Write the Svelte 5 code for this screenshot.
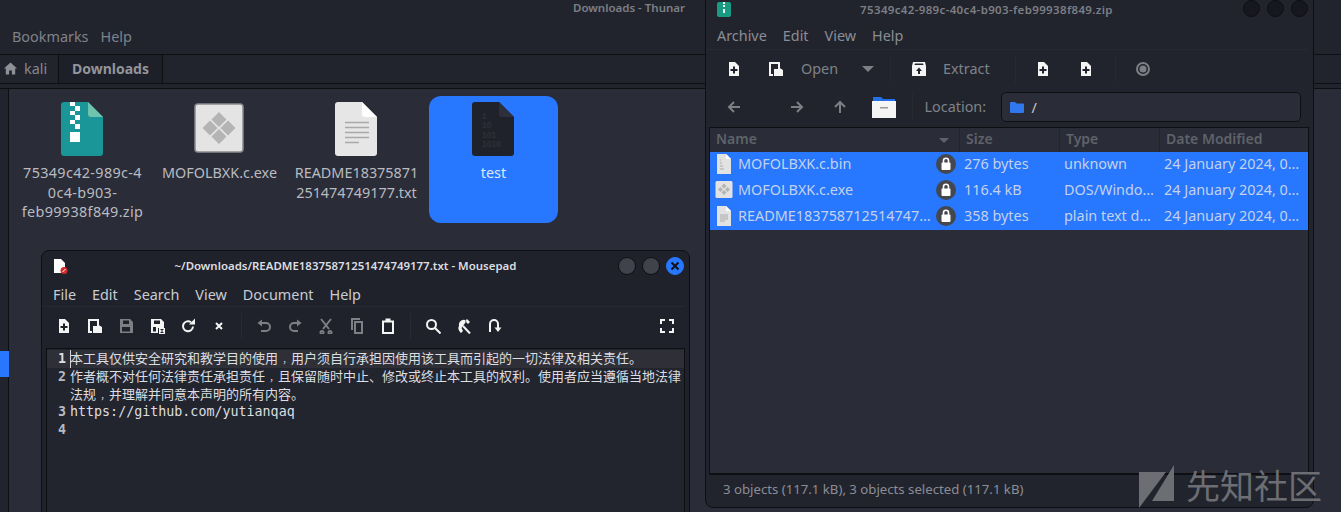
<script>
  const W = '#f4f4f4', D = '#20222b', G = '#7d7f85';
  const icons = {
    add: [['M3 1h6l4 4v10H3z', W], ['M7 5.500h2v2.500h2.500v2H9v2.500H7V10H4.500V8H7z', D]],
    open: [['M1 1h11v6h-2V3H3v10h2v2H1z', W], ['M6 8h4V6l5 3v6H6z', W]],
    save: [['M2 1h10l3 3v11H2zM5 2.500v3.500h6V2.500zM4 9v4.500h8V9z', G]],
    saveas: [['M2 1h10l3 3v6H9v5H2zM5 2.500v3.500h6V2.500zM4 9v4.500h3V9z', W], ['M10 10h6v6h-6zM11.500 11v1h1v2h-1v1h3v-1h-1v-2h1v-1z', W]],
    reload: [['M13 8.500a5 5 0 1 1-2-4.300', 'none', W], ['M9 6.500h6v-6z', W]],
    close: [['M5 5l6 6M11 5l-6 6', 'none', W]],
    undo: [['M4 5h6a3.500 3.500 0 0 1 0 8H5', 'none', G], ['M6 1.500v7L1.500 5z', G]],
    redo: [['M12 5H7a3.500 3.500 0 0 0 0 8h4', 'none', G], ['M10 1.500v7L14.500 5z', G]],
    cut: [['M3 1l8 10M13 1l-8 10', 'none', G], ['M4 13a1.500 1.500 0 1 0 .01 0M12 13a1.500 1.500 0 1 0 .01 0', 'none', G]],
    copy: [['M2 0h9v2H4v10H2z', G], ['M5 3h9v13H5zM7 5v9h5V5z', G]],
    paste: [['M2 2.500h3.500V.500h5v2H14V16H2zM4 4.500V14h8V4.500z', W]],
    search: [['M6.500 6.500m-4.500 0a4.500 4.500 0 1 0 9 0a4.500 4.500 0 1 0-9 0M10 10l5.500 5.500', 'none', W]],
    replace: [['M7 8l7 7.500', 'none', W], ['M3 8a5 5 0 0 1 6-6l1.500 1L7 8 5.500 10 7 13l-2 2C3 13 1.500 10.500 3 8zM11 1l3 3-2 2-3-3z', W]],
    jump: [['M3 14V6a4 4 0 0 1 8 0v4', 'none', W], ['M7.500 9.500h7L11 14z', W]],
    full: [['M2 6V2h4M10 2h4v4M14 10v4h-4M6 14H2v-4', 'none', W]],
    extract: [['M2 1h12l1 4v10H1V5zM4 2.500 3.500 4h9L12 2.500zM8 6.500 5 10h2v3h2v-3h2z', W]],
    back: [['M14 8H3M8 3 3 8l5 5', 'none', G]],
    forward: [['M2 8h11M8 3l5 5-5 5', 'none', G]],
    up: [['M8 14V3M3 8l5-5 5 5', 'none', G]],
    record: [['M8 8m-6 0a6 6 0 1 0 12 0a6 6 0 1 0-12 0', 'none', G], ['M8 8m-3.500 0a3.500 3.500 0 1 0 7 0a3.500 3.500 0 1 0-7 0', G]]
  };
  const padTools = [
    ['add'], ['open'], ['save'], ['saveas'], ['reload'], ['close'], 'sep',
    ['undo'], ['redo'], ['cut'], ['copy'], ['paste'], 'sep',
    ['search'], ['replace'], ['jump']
  ];
  const rows = [
    { name: 'MOFOLBXK.c.bin', size: '276 bytes', type: 'unknown', kind: 'bin' },
    { name: 'MOFOLBXK.c.exe', size: '116.4 kB', type: 'DOS/Windo…', kind: 'exe' },
    { name: 'README183758712514747…', size: '358 bytes', type: 'plain text d…', kind: 'txt' }
  ];
</script>

{#snippet ico(n)}
  <svg class="ico" viewBox="0 0 16 16" width="16" height="16">
    {#each icons[n] as p}
      <path d={p[0]} fill={p[1]} stroke={p[2] || 'none'} stroke-width="2" fill-rule="evenodd" />
    {/each}
  </svg>
{/snippet}

{#snippet lock()}
  <svg class="lock" viewBox="0 0 20 20" width="20" height="20">
    <circle cx="10" cy="10" r="10" fill="#45474f" />
    <rect x="5.500" y="8.500" width="9" height="7.500" rx="1" fill="#fff" />
    <path d="M7.500 9V6.800a2.500 2.500 0 0 1 5 0V9" fill="none" stroke="#fff" stroke-width="1.600" />
  </svg>
{/snippet}

<div class="thunar">
  <header class="th-head">
    <div class="th-title">Downloads - Thunar</div>
    <nav class="th-menu"><span>Bookmarks</span><span>Help</span></nav>
  </header>
  <div class="pathbar">
    <div class="crumb home">
      <svg viewBox="0 0 16 16" width="15" height="15"><path d="M8 1.500 1 8h2v6.500h3.500V10h3v4.500H13V8h2z" fill="#8f9197" /></svg>
      <span>kali</span>
    </div>
    <div class="crumb current">Downloads</div>
  </div>
  <div class="strip"></div>
  <div class="th-body">
    <aside class="sidebar"><div class="side-sel"></div></aside>
    <main class="grid">
      <div class="item">
        <svg viewBox="0 0 42 54" width="42" height="54">
          <path d="M3 0h24l15 15v36a3 3 0 0 1-3 3H3a3 3 0 0 1-3-3V3a3 3 0 0 1 3-3z" fill="#1a9598" />
          <path d="M27 0l15 15H30a3 3 0 0 1-3-3z" fill="#6fc4ae" />
          <path d="M9 0h5v4H9zM14 4h5v5h-5zM9 9h5v4H9zM14 13h5v5h-5zM9 18h5v4H9zM14 22h5v5h-5zM9 30h10v10H9z" fill="#fff" />
        </svg>
        <div class="lbl wide">75349c42-989c-4<br />0c4-b903-<br />feb99938f849.zip</div>
      </div>
      <div class="item">
        <svg viewBox="0 0 50 50" width="50" height="50" class="exe">
          <rect x="1" y="1" width="48" height="48" rx="3" fill="#e4e4e4" stroke="#8a8b8f" stroke-width="1.500" />
          <path d="M25 9l7.500 7.500L25 24l-7.500-7.500zM25 26l7.500 7.500L25 41l-7.500-7.500zM16 17.500 23.500 25 16 32.500 8.500 25zM34 17.500 41.500 25 34 32.500 26.500 25z" fill="#b4b4b4" />
        </svg>
        <div class="lbl">MOFOLBXK.c.exe</div>
      </div>
      <div class="item">
        <svg viewBox="0 0 42 54" width="42" height="54">
          <path d="M3 0h24l15 15v36a3 3 0 0 1-3 3H3a3 3 0 0 1-3-3V3a3 3 0 0 1 3-3z" fill="#e6e6e6" />
          <path d="M27 0l15 15H30a3 3 0 0 1-3-3z" fill="#fff" />
          <path d="M10 20.500h24M10 25.500h24M10 30.500h24M10 35.500h24M10 40.500h14" stroke="#a9a9a9" stroke-width="1.500" />
        </svg>
        <div class="lbl">README18375871<br />251474749177.txt</div>
      </div>
      <div class="item sel">
        <svg viewBox="0 0 42 54" width="42" height="54">
          <path d="M3 0h24l15 15v36a3 3 0 0 1-3 3H3a3 3 0 0 1-3-3V3a3 3 0 0 1 3-3z" fill="#20222b" />
          <path d="M27 0l15 15H30a3 3 0 0 1-3-3z" fill="#2d2f3b" />
          <text x="10" y="17" class="bits">1</text>
          <text x="10" y="26" class="bits">10</text>
          <text x="10" y="36" class="bits">101</text>
          <text x="10" y="45" class="bits">1010</text>
        </svg>
        <div class="lbl">test</div>
      </div>
    </main>
  </div>

  <section class="win pad">
    <div class="pad-title">
      <svg class="pad-ico" viewBox="0 0 14 15" width="14" height="15">
        <path d="M0 0h7l4 4v10H0z" fill="#fff" />
        <circle cx="10" cy="11.500" r="3.500" fill="#d22c2c" />
        <path d="M8.500 13l3-3" stroke="#fff" stroke-width="1" />
      </svg>
      <div class="pad-name">~/Downloads/README18375871251474749177.txt - Mousepad</div>
      <div class="btns">
        <span class="dot"></span><span class="dot"></span>
        <span class="dot x">
          <svg viewBox="0 0 10 10" width="10" height="10"><path d="M1.500 1.500l7 7M8.500 1.500l-7 7" stroke="#101218" stroke-width="2" /></svg>
        </span>
      </div>
    </div>
    <nav class="pad-menu">
      <span>File</span><span>Edit</span><span>Search</span><span>View</span><span>Document</span><span>Help</span>
    </nav>
    <div class="pad-tools">
      {#each padTools as t}
        {#if t === 'sep'}<i class="tsep"></i>{:else}<span class="tb">{@render ico(t[0])}</span>{/if}
      {/each}
      <span class="tb push">{@render ico('full')}</span>
    </div>
    <div class="editor">
      <div class="ln cur"><b>1</b><p><i class="caret"></i>本工具仅供安全研究和教学目的使用<span class="cm">，</span>用户须自行承担因使用该工具而引起的一切法律及相关责任。</p></div>
      <div class="ln"><b>2</b><p>作者概不对任何法律责任承担责任<span class="cm">，</span>且保留随时中止、修改或终止本工具的权利。使用者应当遵循当地法律<br />法规<span class="cm">，</span>并理解并同意本声明的所有内容。</p></div>
      <div class="ln"><b>3</b><p class="url">https://github.com/yutianqaq</p></div>
      <div class="ln"><b>4</b><p></p></div>
    </div>
  </section>

  <section class="win arch">
    <div class="ar-title">
      <svg class="ar-ico" viewBox="0 0 14 15" width="14" height="15">
        <rect width="14" height="15" rx="2" fill="#1a9a82" />
        <path d="M6 0h2v2H6zM6 3h2v2H6zM6 7h2v4H6z" fill="#e8f5f0" />
      </svg>
      <div class="ar-name">75349c42-989c-40c4-b903-feb99938f849.zip</div>
      <div class="btns dim"><span class="dot"></span><span class="dot"></span><span class="dot"></span></div>
    </div>
    <nav class="ar-menu"><span>Archive</span><span>Edit</span><span>View</span><span>Help</span></nav>
    <div class="ar-tools">
      <span class="tb t1">{@render ico('add')}</span>
      <span class="tb t2">{@render ico('open')}</span>
      <span class="tl t3">Open</span>
      <span class="caretdown t4"></span>
      <i class="tsep2 s1"></i>
      <span class="tb t5">{@render ico('extract')}</span>
      <span class="tl t6">Extract</span>
      <i class="tsep2 s2"></i>
      <span class="tb t7">{@render ico('add')}</span>
      <span class="tb t8">{@render ico('add')}</span>
      <i class="tsep2 s3"></i>
      <span class="tb t9">{@render ico('record')}</span>
    </div>
    <div class="ar-nav">
      <span class="tb n1">{@render ico('back')}</span>
      <span class="tb n2">{@render ico('forward')}</span>
      <span class="tb n3">{@render ico('up')}</span>
      <svg class="home-folder" viewBox="0 0 24 22" width="24" height="22">
        <path d="M1 3V1h8l2 2h12v3H1z" fill="#2470e8" />
        <path d="M0 5h24v17H0z" fill="#f5f5f5" />
        <path d="M8 11h8v1.500H8z" fill="#9a9a9a" />
      </svg>
      <i class="tsep2 s4"></i>
      <span class="loc">Location:</span>
      <div class="entry">
        <svg viewBox="0 0 14 12" width="14" height="12"><path d="M0 2a1 1 0 0 1 1-1h4l1.500 1.500H13a1 1 0 0 1 1 1V11a1 1 0 0 1-1 1H1a1 1 0 0 1-1-1z" fill="#2f78ee" /></svg>
        <span>/</span>
      </div>
    </div>
    <div class="tree">
      <div class="thead">
        <div class="c1">Name<i class="small"></i></div>
        <div class="c2">Size</div>
        <div class="c3">Type</div>
        <div class="c4">Date Modified</div>
      </div>
      {#each rows as r}
        <div class="row">
          <div class="r1">
            <svg viewBox="0 0 18 20" width="18" height="20" class="ri">
              {#if r.kind === 'exe'}
                <rect x="0.500" y="1" width="17" height="17" rx="1.500" fill="#e2e2e2" />
                <path d="M9 3.500l2.500 2.500L9 8.500 6.500 6zM9 10l2.500 2.500L9 15l-2.500-2.500zM5.500 7l2.500 2.500L5.500 12 3 9.500zM12.500 7 15 9.500 12.500 12 10 9.500z" fill="#b4b4b4" />
              {:else}
                <path d="M2 0h9l5 5v15H2z" fill="#e2e2e2" />
                <path d="M11 0l5 5h-5z" fill="#fff" />
                {#if r.kind === 'txt'}
                  <path d="M5 9h8M5 11h8M5 13h8M5 15h5" stroke="#a9a9a9" stroke-width="1" />
                {:else}
                  <path d="M5 6h1M5 9h2M5 12h3M5 15h4" stroke="#a9a9a9" stroke-width="1.200" />
                {/if}
              {/if}
            </svg>
            <span class="rn">{r.name}</span>
            {@render lock()}
          </div>
          <div class="r2">{r.size}</div>
          <div class="r3">{r.type}</div>
          <div class="r4">24 January 2024, 0…</div>
        </div>
      {/each}
      <div class="fill"></div>
    </div>
    <div class="status">3 objects (117.1 kB), 3 objects selected (117.1 kB)</div>
  </section>

  <div class="mark">
    <svg viewBox="0 0 35 43" width="35" height="43"><path d="M0 7h27L0 43zM35 0v36H13z" fill="#6c6e73" /></svg>
    <span>先知社区</span>
  </div>
</div>

<style>
  :global(body) { margin: 0; background: #282a36; overflow: hidden; }
  .thunar {
    position: relative; width: 1341px; height: 512px; overflow: hidden;
    background: #2a2c38; color: #c8c9cc;
    font: 14.400px "Noto Sans", "Noto Sans CJK SC", sans-serif;
    display: flex; flex-direction: column;
  }
  .th-head { height: 55px; box-sizing: border-box; background: #22242d; border-bottom: 1px solid #0e0f13; flex: none; }
  .th-title { height: 16px; padding-left: 573px; font-size: 11.500px; font-weight: 600; line-height: 15px; color: #7d7f85; }
  .th-menu { display: flex; gap: 12px; padding: 10px 0 0 12px; color: #7f828a; line-height: 22px; }
  .pathbar { height: 29px; box-sizing: border-box; background: #22242d; border-bottom: 1px solid #0e0f13; display: flex; flex: none; }
  .crumb { display: flex; align-items: center; height: 28px; box-sizing: border-box; padding-bottom: 2px; }
  .home { width: 59px; padding-left: 3px; gap: 6px; color: #85878d; border-right: 1px solid #0e0f13; }
  .current { width: 104px; justify-content: center; font-weight: 700; font-size: 14px; color: #92949a; background: #1e2029; border-right: 1px solid #0e0f13; }
  .strip { height: 5px; box-sizing: border-box; background: #22242d; border-bottom: 1px solid #0e0f13; flex: none; }
  .th-body { flex: 1; display: flex; min-height: 0; }
  .sidebar { width: 8px; border-right: 1px solid #0e0f13; background: #22242d; padding-top: 262px; flex: none; }
  .side-sel { width: 9px; height: 26px; background: #2777ff; }
  .grid { display: flex; gap: 8px; padding: 7px 0 0 9px; align-items: flex-start; }
  .item { width: 129px; height: 127px; box-sizing: border-box; padding-top: 6px; display: flex; flex-direction: column; align-items: center; border-radius: 12px; flex: none; }
  .item > svg { margin-right: 2px; }
  .item.sel { background: #2777ff; }
  .item > .exe { margin-top: 1px; margin-bottom: 3px; }
  .lbl { margin-top: 7px; text-align: center; line-height: 19.500px; color: #b9bbc0; white-space: nowrap; }
  .wide { letter-spacing: 0.350px; }
  .sel .lbl { color: #dfe8f8; }
  .bits { font: 700 8.500px "Liberation Sans", sans-serif; fill: #2e3039; }
  .ico { display: block; }
  .win { position: absolute; box-sizing: border-box; background: #22242d; display: flex; flex-direction: column; }
  .pad { left: 41px; top: 250px; width: 649px; height: 280px; border: 1px solid #0e0f13; border-radius: 8px 8px 0 0; background: #20222b; }
  .pad-title { height: 29px; flex: none; position: relative; display: flex; align-items: center; justify-content: center; padding-right: 40px; }
  .pad-ico { position: absolute; left: 12px; top: 8px; }
  .pad-name { font-size: 11.450px; font-weight: 600; color: #dcdde0; }
  .btns { position: absolute; right: 5px; top: 6px; display: flex; gap: 6px; }
  .dot { width: 18px; height: 18px; box-sizing: border-box; border-radius: 50%; background: #41434c; border: 1px solid #0e0f13; display: flex; align-items: center; justify-content: center; }
  .dot.x { background: #2777ff; border-color: #2777ff; }
  .pad-menu { display: flex; gap: 16px; height: 27px; padding: 2px 0 0 11px; align-items: center; color: #c8ccd3; flex: none; border-bottom: 1px solid #272932; box-sizing: border-box; margin-right: 4px; }
  .pad-tools { height: 41px; flex: none; display: flex; align-items: center; padding: 0 7px 3px 6px; box-sizing: border-box; }
  .tb { width: 31px; height: 16px; display: flex; justify-content: center; flex: none; }
  .tsep { width: 1px; height: 26px; margin: 0 6.500px; background: #282a33; flex: none; }
  .push { margin-left: auto; }
  .editor { flex: 1; margin: 0 4px; background: #23252e; border: 1px solid #0e0f13; padding-top: 1px; font: 13.300px/18px "DejaVu Sans Mono", "Noto Sans CJK SC", monospace; color: #dcdee2; }
  .ln { display: flex; min-height: 18px; margin-bottom: -0.500px; }
  .ln.cur { background: #2f3037; }
  .ln b { width: 19px; margin-right: 4px; text-align: right; font-weight: 700; flex: none; }
  .ln:not(.cur) b { color: #b9bbc0; }
  .ln p { margin: 0; font-size: 13px; position: relative; white-space: nowrap; }
  .ln .url { font-size: 13.330px; }
  .cm { display: inline-block; width: 13px; box-sizing: border-box; padding-left: 4.500px; font-size: 8.500px; line-height: 8px; }
  .caret { position: absolute; left: 0; top: 0; width: 1px; height: 18px; background: #d3d5d9; }
  .arch { left: 705px; top: -1px; width: 609px; height: 509px; border: 1px solid #0e0f13; border-radius: 0 0 8px 8px; }
  .ar-title { height: 18px; flex: none; position: relative; display: flex; align-items: center; justify-content: center; padding-right: 46px; }
  .ar-ico { position: absolute; left: 11px; top: 2px; }
  .ar-name { font-size: 11.500px; font-weight: 600; color: #7d7f85; letter-spacing: 0.350px; }
  .btns.dim { right: 5px; top: 0; gap: 7px; }
  .btns.dim .dot { width: 17px; height: 17px; background: #17181f; }
  .ar-menu { height: 32px; flex: none; display: flex; gap: 16px; align-items: center; padding: 4px 0 0 11px; color: #8a8d95; margin: 0 5px 0 0; border-bottom: 1px solid #272932; box-sizing: border-box; }
  .ar-tools { height: 38px; flex: none; display: flex; align-items: center; }
  .tl { color: #7f8289; padding-bottom: 2px; }
  .t1 { margin-left: 12.500px; }
  .t2 { margin-left: 11px; }
  .t3 { margin-left: 9.500px; width: 36px; }
  .t4 { margin-left: 25px; }
  .caretdown { width: 0; height: 0; border-left: 6px solid transparent; border-right: 6px solid transparent; border-top: 6px solid #7d7f85; }
  .tsep2 { width: 1px; height: 26px; background: #282a33; flex: none; }
  .s1 { margin-left: 16px; }
  .t5 { margin-left: 20px; width: 16px; }
  .t6 { margin-left: 16px; width: 48px; }
  .s2 { margin-left: 24px; }
  .t7 { margin-left: 11.500px; }
  .t8 { margin-left: 12px; }
  .s3 { margin-left: 13.500px; }
  .t9 { margin-left: 11.500px; }
  .ar-nav { height: 38px; flex: none; display: flex; align-items: center; }
  .n1 { margin-left: 12.500px; }
  .n2 { margin-left: 32px; }
  .n3 { margin-left: 12px; }
  .home-folder { margin-left: 16px; }
  .s4 { margin-left: 16px; }
  .loc { margin-left: 12px; width: 76px; color: #7f8289; padding-bottom: 2px; }
  .entry { width: 300px; height: 30px; box-sizing: border-box; border: 1px solid #0e0f13; border-radius: 5px; background: #2a2c38; display: flex; align-items: center; gap: 8px; padding-left: 8px; color: #c8c9cc; }
  .tree { flex: 1; margin: 1px 4px 0 3px; display: flex; flex-direction: column; border: 1px solid #0e0f13; border-bottom: none; background: #2a2c38; min-height: 0; }
  .thead { display: flex; height: 24px; flex: none; color: #5f6269; font-weight: 600; font-size: 14px; line-height: 21px; }
  .thead div { box-sizing: border-box; padding-left: 6px; border-right: 1px solid #23252e; flex: none; }
  .c1 { width: 250px; position: relative; }
  .small { position: absolute; right: 10px; top: 10px; border-style: solid; border-width: 5px 5px 0; border-color: #5f6269 transparent transparent; width: 0; height: 0; }
  .c2, .c3 { width: 100px; }
  .thead .c4 { width: 140px; border-right: none; }
  .row { display: flex; height: 26px; box-sizing: border-box; padding-bottom: 2px; align-items: center; background: #2777ff; color: #c3d2ea; flex: none; }
  .r1 { width: 250px; display: flex; align-items: center; flex: none; position: relative; }
  .ri { margin-left: 5px; flex: none; }
  .rn { margin-left: 5px; flex: 1; white-space: nowrap; padding-bottom: 1px; }
  .lock { margin-right: 4px; flex: none; }
  .r2 { width: 100px; padding: 0 0 1px 4px; box-sizing: border-box; flex: none; }
  .r3 { width: 100px; box-sizing: border-box; padding: 0 0 1px 4px; flex: none; }
  .r4 { padding: 0 0 1px 4px; white-space: nowrap; }
  .fill { flex: 1; }
  .status { height: 34px; flex: none; margin: 0 4px 0 3px; border-top: 2px solid #0e0f13; box-sizing: border-box; padding-left: 14px; line-height: 28px; color: #8a8d95; font-size: 13.200px; }
  .mark { position: absolute; left: 1139px; top: 465px; display: flex; align-items: center; gap: 12px; color: #6c6e73; font-size: 34px; line-height: 43px; }
</style>
